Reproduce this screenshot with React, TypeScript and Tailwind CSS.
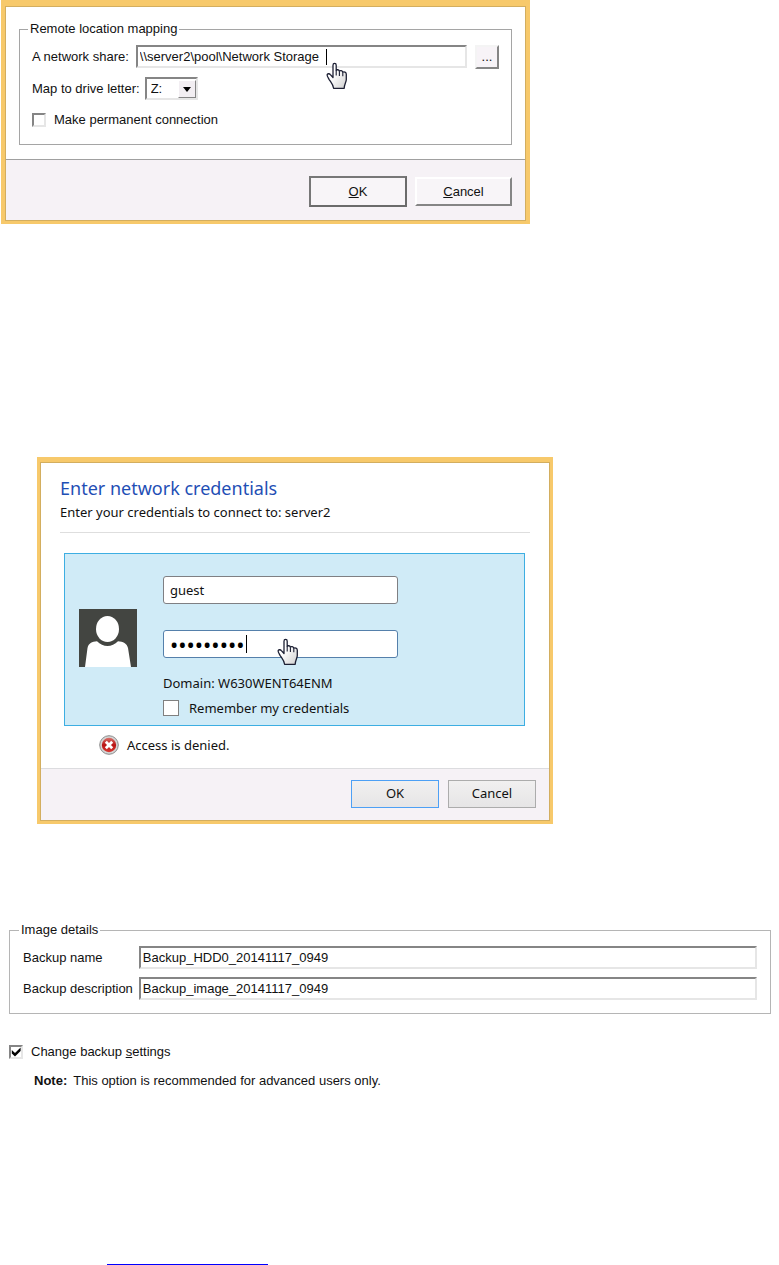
import { useState } from "react";
import type { InputHTMLAttributes, ReactNode } from "react";
import clsx from "clsx";

const sunken =
  "border-2 border-t-[#858585] border-l-[#858585] border-r-[#e6e6e6] border-b-[#e6e6e6] bg-white";

const HandCursor = ({ className }: { className: string }) => (
  <svg
    viewBox="0 0 22 28"
    className={clsx("pointer-events-none absolute h-7 w-[22px]", className)}
    aria-hidden="true"
  >
    <defs>
      <linearGradient id="hand" x1="0" y1="0" x2="1" y2="1">
        <stop offset="0.4" stopColor="#fff" />
        <stop offset="1" stopColor="#cfcfcf" />
      </linearGradient>
    </defs>
    <path
      d="M7 15.5V3.2C7 .8 10.2.8 10.2 3.2V8.5C10.6 7.3 13.2 7.5 13.4 9.2C14.2 8.1 16.4 8.6 16.7 10.2C18 9.4 20.3 10.2 20.3 12.2V17.5C20.3 20 18.4 22 18.2 26.3H7.6C7.2 22.6 4.8 20.2 3.2 17.6C2.2 15.8 1 14.2 1.1 12.9C1.3 11.5 3.4 11.3 4.4 12.6Z"
      fill="url(#hand)"
      stroke="#1c1f33"
      strokeWidth="1.3"
      strokeLinejoin="round"
    />
    <path
      d="M10.2 8.5V13.5M13.4 9.2V14M16.8 10.2V14.3"
      fill="none"
      stroke="#1c1f33"
      strokeWidth="1.1"
    />
  </svg>
);

const Caret = ({ className }: { className: string }) => (
  <span className={clsx("pointer-events-none absolute w-px bg-black", className)} />
);

const ClassicInput = ({ className, ...props }: InputHTMLAttributes<HTMLInputElement>) => (
  <input
    type="text"
    className={clsx(
      "h-[23px] w-full min-w-0 rounded-none px-0.5 text-[13px] leading-4 outline-none",
      sunken,
      className
    )}
    {...props}
  />
);

const ClassicCheckbox = ({ id, defaultChecked = false }: { id: string; defaultChecked?: boolean }) => {
  const [checked, setChecked] = useState(defaultChecked);
  return (
    <span className="relative flex size-[14px] shrink-0">
      <input
        id={id}
        type="checkbox"
        checked={checked}
        onChange={(e) => setChecked(e.target.checked)}
        className={clsx("size-[14px] appearance-none", sunken)}
      />
      {checked && (
        <svg
          viewBox="0 0 14 14"
          className="pointer-events-none absolute inset-0 size-[14px]"
          aria-hidden="true"
        >
          <path d="M2.8 5L6 8L11.6 2.6V6L6 11.6L2.8 8.4Z" fill="#000" />
        </svg>
      )}
    </span>
  );
};

const DialogFrame = ({ className, children }: { className: string; children: ReactNode }) => (
  <section className={clsx("w-full border-[#f7c96b] bg-[#f7c96b]", className)}>
    <div className="border border-[#d3ae5f] bg-white">{children}</div>
  </section>
);

const MappingDialog = () => (
  <DialogFrame className="ml-px max-w-[529px] border-x-4 border-t-[6px] border-b-[3px]">
    <form onSubmit={(e) => e.preventDefault()}>
      <div className="px-[13px] pt-[14px] pb-[14px]">
        <fieldset className="border border-[#a5a5a5] px-3 pb-4">
          <legend className="-ml-1 px-0.5 leading-4">Remote location mapping</legend>
          <div className="flex items-start pt-2">
            <label htmlFor="share" className="shrink-0 pt-1 pr-[7px] leading-4">
              A network share:
            </label>
            <div className="relative min-w-0 flex-1">
              <ClassicInput id="share" defaultValue="\\server2\pool\Network Storage" />
              <Caret className="top-1 left-[190px] h-4" />
              <HandCursor className="top-[17px] left-[190px]" />
            </div>
            <button
              type="button"
              className="ml-2 h-6 w-6 shrink-0 border-2 border-t-[#f4f4f4] border-r-[#858585] border-b-[#858585] border-l-[#f4f4f4] bg-[#f7f3f7] leading-4"
            >
              ...
            </button>
          </div>
          <div className="mt-2 flex items-center">
            <label htmlFor="drive" className="pr-[5px] leading-4">
              Map to drive letter:
            </label>
            <span className="relative flex">
              <select
                id="drive"
                className={clsx("h-[23px] w-[53px] appearance-none rounded-none pl-1 leading-4 outline-none", sunken)}
              >
                <option>Z:</option>
              </select>
              <span className="pointer-events-none absolute top-[3px] right-0.5 flex h-[18px] w-[18px] items-center justify-center border border-t-white border-r-[#858585] border-b-[#858585] border-l-white bg-[#f2eef2]">
                <svg viewBox="0 0 8 5" className="h-[5px] w-2" aria-hidden="true">
                  <path d="M0 0H8L4 5Z" fill="#000" />
                </svg>
              </span>
            </span>
          </div>
          <div className="mt-3 flex items-center gap-2">
            <ClassicCheckbox id="permanent" />
            <label htmlFor="permanent" className="leading-4">
              Make permanent connection
            </label>
          </div>
        </fieldset>
      </div>
      <div className="flex items-center justify-end gap-2 border-t border-[#a0a0a0] bg-[#f6f2f6] pt-4 pr-[13px] pb-[13px]">
        <button
          type="submit"
          className="h-[31px] w-[98px] border-2 border-t-[#777] border-r-[#6b6b6b] border-b-[#6b6b6b] border-l-[#777] bg-[#f8f5f8] leading-4"
        >
          <span className="underline">O</span>K
        </button>
        <button
          type="button"
          className="h-[29px] w-[97px] border-2 border-t-white border-r-[#858585] border-b-[#858585] border-l-white bg-[#f8f5f8] leading-4"
        >
          <span className="underline">C</span>ancel
        </button>
      </div>
    </form>
  </DialogFrame>
);

const Avatar = () => (
  <svg viewBox="0 0 58 58" className="size-[58px] shrink-0" aria-hidden="true">
    <rect width="58" height="58" fill="#434541" />
    <ellipse cx="28.5" cy="20" rx="11.5" ry="13" fill="#fff" />
    <path
      d="M6 58L8.5 39C9.3 34.5 13 32.3 18 32.2C24 38.5 33 38.5 39 32.2C44 32.3 48 34.5 49 39L52 58Z"
      fill="#fff"
    />
  </svg>
);

const ErrorIcon = () => (
  <svg viewBox="0 0 20 20" className="size-5 shrink-0" aria-hidden="true">
    <defs>
      <linearGradient id="err" x1="0" y1="0" x2="0" y2="1">
        <stop offset="0" stopColor="#d9706a" />
        <stop offset="0.5" stopColor="#b91414" />
        <stop offset="1" stopColor="#d83a34" />
      </linearGradient>
    </defs>
    <circle cx="10" cy="10" r="9.3" fill="#d4d4d4" stroke="#8c8c8c" strokeWidth="1" />
    <circle cx="10" cy="10" r="7.2" fill="url(#err)" />
    <path d="M6.8 6.8L13.2 13.2M13.2 6.8L6.8 13.2" stroke="#fff" strokeWidth="2.8" />
  </svg>
);

const CredentialsDialog = () => (
  <DialogFrame className="mt-[233px] ml-[37px] max-w-[516px] border-x-[3px] border-t-[5px] border-b-[3px] font-['Noto_Sans',sans-serif]">
    <form onSubmit={(e) => e.preventDefault()}>
      <div className="px-[19px] pt-[15px] pb-[13px]">
        <h1 className="text-[18px] leading-5 text-[#1f4fb5]">Enter network credentials</h1>
        <p className="mt-1 leading-5">Enter your credentials to connect to: server2</p>
        <hr className="mt-2.5 border-[#dedede]" />
        <div className="mt-5 mr-[5px] ml-1 flex items-center border border-[#3daee2] bg-[#d0ebf7] pt-[22px] pr-6 pb-[7px] pl-[14px]">
          <div className="flex items-start gap-[26px]">
            <div className="pt-[33px]">
              <Avatar />
            </div>
            <div>
              <input
                type="text"
                aria-label="User name"
                defaultValue="guest"
                className="block h-7 w-[235px] rounded-[3px] border border-[#7f7f83] bg-white px-1.5 outline-none"
              />
              <div className="relative mt-[26px]">
                <input
                  type="password"
                  aria-label="Password"
                  defaultValue="secret123"
                  className="block h-7 w-[235px] rounded-[3px] border border-[#5580ab] bg-white px-1.5 text-[22px] leading-6 text-black outline-none"
                />
                <Caret className="top-[5px] left-[83px] h-[18px]" />
                <HandCursor className="top-2 left-[114px]" />
              </div>
              <p className="mt-[15px] leading-5">Domain: W630WENT64ENM</p>
              <div className="mt-[5px] flex items-center gap-[10px]">
                <input
                  id="remember"
                  type="checkbox"
                  className="size-4 appearance-none border border-[#808080] bg-white"
                />
                <label htmlFor="remember" className="leading-5">
                  Remember my credentials
                </label>
              </div>
            </div>
          </div>
        </div>
        <div className="mt-[9px] ml-[39px] flex items-center gap-2">
          <ErrorIcon />
          <p className="leading-5">Access is denied.</p>
        </div>
      </div>
      <div className="flex justify-end gap-[9px] border-t border-[#dcdcdf] bg-[#f6f2f6] pt-[11px] pr-[13px] pb-3">
        <button
          type="submit"
          className="h-7 w-[88px] border border-[#4da0f5] bg-linear-to-b from-[#f1f0f0] to-[#e6e5e6]"
        >
          OK
        </button>
        <button
          type="button"
          className="h-7 w-[88px] border border-[#acacac] bg-linear-to-b from-[#f1f0f0] to-[#e6e5e6]"
        >
          Cancel
        </button>
      </div>
    </form>
  </DialogFrame>
);

const ImageDetails = () => (
  <section className="mt-[98px] pr-2 pl-[9px]">
    <fieldset className="border border-[#b5b5b5] px-[13px] pb-[13px]">
      <legend className="-ml-1 px-0.5 leading-4">Image details</legend>
      <div className="grid grid-cols-[auto_1fr] items-center gap-x-1.5 gap-y-2 pt-2">
        <label htmlFor="backup-name" className="leading-4">
          Backup name
        </label>
        <ClassicInput id="backup-name" defaultValue="Backup_HDD0_20141117_0949" />
        <label htmlFor="backup-desc" className="leading-4">
          Backup description
        </label>
        <ClassicInput id="backup-desc" defaultValue="Backup_image_20141117_0949" />
      </div>
    </fieldset>
    <div className="mt-[30px] flex items-center gap-2">
      <ClassicCheckbox id="change" defaultChecked />
      <label htmlFor="change" className="leading-4">
        Change backup <span className="underline">s</span>ettings
      </label>
    </div>
    <p className="mt-[13px] ml-[25px] leading-4">
      <b className="mr-1.5">Note:</b>
      This option is recommended for advanced users only.
    </p>
  </section>
);

const App = () => (
  <main className="bg-white font-['Liberation_Sans',Arial,sans-serif] text-[13px] text-[#111]">
    <MappingDialog />
    <CredentialsDialog />
    <ImageDetails />
    <a
      href="#top"
      aria-label="Back to top"
      className="mt-[156px] ml-[107px] block h-5 w-[161px] border-b border-[#0000ff]"
    />
  </main>
);

export default App;
